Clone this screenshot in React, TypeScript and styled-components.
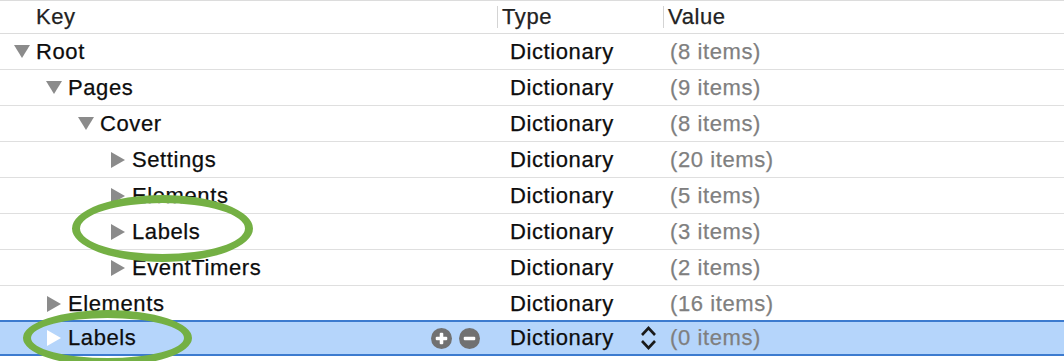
import React from 'react';
import styled, { createGlobalStyle } from 'styled-components';

const GlobalStyle = createGlobalStyle`
  html, body {
    margin: 0;
    padding: 0;
    background: #fff;
  }
  body {
    font-family: 'Liberation Sans', Helvetica, Arial, sans-serif;
    font-size: 22px;
    letter-spacing: 0.6px;
    color: #0d0d0d;
    -webkit-text-stroke: 0.25px currentColor;
  }
`;

interface INode {
  key: string;
  depth: number;
  open?: boolean; // true 展开, false 收起
  type: string;
  value: string;
  selected?: boolean;
}

const rows: INode[] = [
  { key: 'Root', depth: 0, open: true, type: 'Dictionary', value: '(8 items)' },
  { key: 'Pages', depth: 1, open: true, type: 'Dictionary', value: '(9 items)' },
  { key: 'Cover', depth: 2, open: true, type: 'Dictionary', value: '(8 items)' },
  { key: 'Settings', depth: 3, open: false, type: 'Dictionary', value: '(20 items)' },
  { key: 'Elements', depth: 3, open: false, type: 'Dictionary', value: '(5 items)' },
  { key: 'Labels', depth: 3, open: false, type: 'Dictionary', value: '(3 items)' },
  { key: 'EventTimers', depth: 3, open: false, type: 'Dictionary', value: '(2 items)' },
  { key: 'Elements', depth: 1, open: false, type: 'Dictionary', value: '(16 items)' },
  { key: 'Labels', depth: 1, open: false, type: 'Dictionary', value: '(0 items)', selected: true },
];

const Page = styled.div`
  position: relative;
  width: 1064px;
  height: 361px;
  overflow: hidden;
`;

const Table = styled.div`
  display: flex;
  flex-direction: column;
  border-top: 1px solid #dcdcdc;
`;

const HeaderRow = styled.div`
  display: grid;
  grid-template-columns: 497px 166px 1fr;
  height: 33px;
  box-sizing: border-box;
  border-bottom: 1px solid #dcdcdc;
  align-items: center;
  color: #222;
`;

const HeaderCell = styled.div<{ $divider?: boolean; $pad: number }>`
  display: flex;
  align-items: center;
  height: 100%;
  padding-left: ${p => p.$pad}px;
  position: relative;
  &::before {
    content: '';
    display: ${p => (p.$divider ? 'block' : 'none')};
    position: absolute;
    left: 0;
    top: 5px;
    bottom: 5px;
    width: 1px;
    background: #d4d4d4;
  }
`;

const Row = styled.div<{ $selected?: boolean }>`
  display: grid;
  grid-template-columns: 497px 166px 1fr;
  height: 36px;
  box-sizing: border-box;
  align-items: center;
  border-bottom: ${p => (p.$selected ? '2px solid #3c7bcf' : '1px solid #dfdfdf')};
  border-top: ${p => (p.$selected ? '2px solid #3c7bcf' : 'none')};
  margin-top: ${p => (p.$selected ? '-2px' : '0')};
  background: ${p => (p.$selected ? '#b5d5fb' : 'transparent')};
`;

const KeyCell = styled.div<{ $depth: number }>`
  display: flex;
  align-items: center;
  gap: 6px;
  padding-left: ${p => 14 + p.$depth * 32}px;
  padding-right: 17px;
  height: 100%;
`;

const KeyText = styled.span`
  flex: 1;
  white-space: nowrap;
`;

const Disclosure = styled.span`
  display: inline-flex;
  width: 16px;
  justify-content: center;
  align-items: center;
`;

const RowButtons = styled.div`
  display: flex;
  gap: 7px;
`;

const TypeCell = styled.div`
  display: flex;
  align-items: center;
  justify-content: space-between;
  padding-left: 13px;
  padding-right: 6px;
  height: 100%;
`;

const ValueCell = styled.div`
  padding-left: 7px;
  color: #7f7f7f;
  white-space: nowrap;
`;

const Annotation = styled.div<{ $x: number; $y: number; $w: number; $h: number }>`
  position: absolute;
  left: ${p => p.$x}px;
  top: ${p => p.$y}px;
  width: ${p => p.$w}px;
  height: ${p => p.$h}px;
  box-sizing: border-box;
  border: 8px solid #74b044;
  border-radius: 50%;
  pointer-events: none;
`;

const Triangle = ({ open, color }: { open?: boolean; color: string }) => (
  <Disclosure>
    {open ? (
      <svg width='16' height='13' viewBox='0 0 16 13'>
        <polygon points='0,0 16,0 8,13' fill={color} />
      </svg>
    ) : (
      <svg width='14' height='16' viewBox='0 0 14 16'>
        <polygon points='0,0 14,8 0,16' fill={color} />
      </svg>
    )}
  </Disclosure>
);

const RoundButton = ({ plus }: { plus?: boolean }) => (
  <svg width='21' height='21' viewBox='0 0 20 20'>
    <circle cx='10' cy='10' r='10' fill='#717171' />
    <rect x='4.5' y='8.3' width='11' height='3.4' rx='1' fill='#fff' />
    {plus && <rect x='8.3' y='4.5' width='3.4' height='11' rx='1' fill='#fff' />}
  </svg>
);

const Stepper = () => (
  <svg width='17' height='26' viewBox='0 0 17 26'>
    <polyline points='2,10 8.5,3 15,10' fill='none' stroke='#1a1a1a' strokeWidth='2.6' />
    <polyline points='2,16 8.5,23 15,16' fill='none' stroke='#1a1a1a' strokeWidth='2.6' />
  </svg>
);

const App = () => (
  <>
    <GlobalStyle />
    <Page>
      <Table>
        <HeaderRow>
          <HeaderCell $pad={36}>Key</HeaderCell>
          <HeaderCell $pad={5} $divider>Type</HeaderCell>
          <HeaderCell $pad={5} $divider>Value</HeaderCell>
        </HeaderRow>
        {rows.map((item, index) => (
          <Row key={index} $selected={item.selected}>
            <KeyCell $depth={item.depth}>
              <Triangle open={item.open} color={item.selected ? '#fff' : '#8b8b8b'} />
              <KeyText>{item.key}</KeyText>
              {item.selected && (
                <RowButtons>
                  <RoundButton plus />
                  <RoundButton />
                </RowButtons>
              )}
            </KeyCell>
            <TypeCell>
              <span>{item.type}</span>
              {item.selected && <Stepper />}
            </TypeCell>
            <ValueCell>{item.value}</ValueCell>
          </Row>
        ))}
      </Table>
      <Annotation $x={72} $y={195} $w={181} $h={67} />
      <Annotation $x={23} $y={310} $w={169} $h={56} />
    </Page>
  </>
);

export default App;
